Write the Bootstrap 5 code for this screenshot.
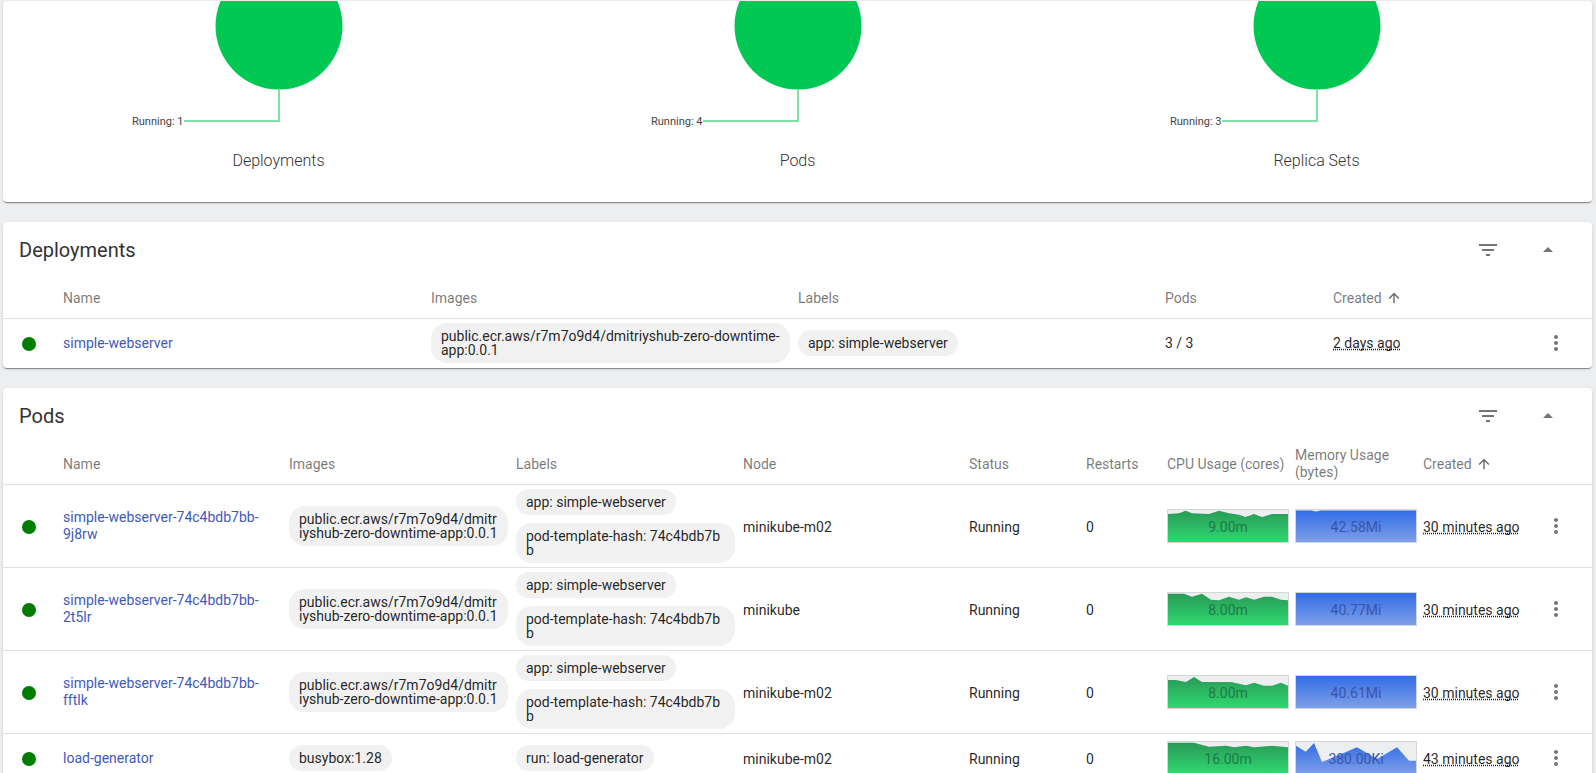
<!DOCTYPE html>
<html lang="en">
<head>
  <meta charset="UTF-8" />
  <meta name="viewport" content="width=device-width, initial-scale=1.0" />
  <title>Workloads</title>
  <link href="https://cdn.jsdelivr.net/npm/bootstrap@5.3.3/dist/css/bootstrap.min.css" rel="stylesheet" />
  <style>
    html, body {
      height: 100%;
      overflow: hidden;
    }
    body {
      background-color: #edeef0;
      font-family: Roboto, "Liberation Sans", sans-serif;
      font-size: 14px;
      color: rgba(0,0,0,.87);
    }
    .page-wrap {
      padding: 1px 4px 0 3px;
    }
    .panel {
      border: 0;
      border-radius: 4px;
      margin-bottom: 20px;
      box-shadow: 0 2px 1px -1px rgba(0,0,0,.3), 0 1px 1px rgba(0,0,0,.14), 0 1px 3px rgba(0,0,0,.12);
    }
    .charts {
      height: 201px;
      padding: 0 16px;
    }
    .chart-box {
      width: 519px;
    }
    .chart-box svg {
      display: block;
    }
    .chart-label {
      font-size: 11px;
      fill: #444;
    }
    .chart-title {
      margin-top: 17px;
      font-size: 16px;
      font-weight: 300;
      line-height: 24px;
      color: #333;
    }
    .panel-bar {
      height: 56px;
      padding: 0 16px;
    }
    .panel-title {
      font-size: 20px;
      font-weight: 400;
      margin: 0;
      color: #333;
    }
    .bar-icons {
      width: 84px;
      margin-right: 16px;
    }
    .kd-table {
      table-layout: fixed;
      width: 100%;
      margin: 0;
      font-size: 14px;
    }
    .kd-table th, .kd-table td {
      padding: 0 8px 0 0;
      vertical-align: middle;
      border-bottom: 1px solid #e0e0e0;
      line-height: 17px;
    }
    .kd-table th {
      height: 40px;
      padding-top: 2px;
      font-weight: 400;
      color: rgba(0,0,0,.54);
    }
    .kd-table th.two-line {
      padding-top: 0;
    }
    .kd-table td {
      height: 83px;
    }
    .kd-table td.text-cell {
      padding-top: 3px;
    }
    .deploy-table td, .kd-table tr.short-row td {
      height: 50px;
    }
    .kd-table tbody tr:last-child td {
      border-bottom: 0;
    }
    .kd-table a {
      color: #3f5ab8;
      text-decoration: none;
    }
    .kd-table td.dot-cell {
      padding-left: 19px;
    }
    .status-dot {
      display: block;
      width: 14px;
      height: 14px;
      border-radius: 50%;
      background: #007c00;
      margin-top: 2px;
    }
    .chip-list {
      display: flex;
      flex-direction: column;
      align-items: flex-start;
      gap: 8px;
    }
    .tag-chip {
      background: #f1f1f1;
      border-radius: 16px;
      padding: 6px 10px;
      line-height: 14px;
      word-break: break-all;
    }
    .word-chip {
      word-break: normal;
      overflow-wrap: anywhere;
    }
    .kd-table abbr {
      text-decoration: underline dotted;
      cursor: default;
    }
    .spark {
      display: block;
      width: 122px;
      height: 34px;
      border: 1px solid #d4d6d8;
      background: #eceef0;
    }
    .spark text {
      font-size: 14px;
      text-anchor: middle;
    }
    .menu-icon {
      display: block;
      margin-left: 6px;
    }
    .sort-arrow {
      margin-left: 4px;
      vertical-align: -3px;
    }
  </style>
</head>
<body>
  <svg width="0" height="0" class="d-block">
    <defs>
      <linearGradient id="greenFill" x1="0" y1="0" x2="0" y2="1">
        <stop offset="0" stop-color="#2a9a57" />
        <stop offset="1" stop-color="#2fd870" />
      </linearGradient>
      <linearGradient id="blueFill" x1="0" y1="0" x2="0" y2="1">
        <stop offset="0" stop-color="#326de6" />
        <stop offset="1" stop-color="#7f9fe8" />
      </linearGradient>
    </defs>
  </svg>

  <div class="page-wrap">
    <!-- status charts -->
    <div class="card panel">
      <div class="charts d-flex">
        <div class="chart-box text-center">
          <svg width="519" height="131">
            <circle cx="260" cy="25" r="63.5" fill="#00c853" />
            <polyline points="260,88 260,120 165,120" fill="none" stroke="#80e0a8" stroke-width="2" />
            <text class="chart-label" x="164.5" y="124" text-anchor="end">Running: 1</text>
          </svg>
          <div class="chart-title">Deployments</div>
        </div>
        <div class="chart-box text-center">
          <svg width="519" height="131">
            <circle cx="260" cy="25" r="63.5" fill="#00c853" />
            <polyline points="260,88 260,120 165,120" fill="none" stroke="#80e0a8" stroke-width="2" />
            <text class="chart-label" x="164.5" y="124" text-anchor="end">Running: 4</text>
          </svg>
          <div class="chart-title">Pods</div>
        </div>
        <div class="chart-box text-center">
          <svg width="519" height="131">
            <circle cx="260" cy="25" r="63.5" fill="#00c853" />
            <polyline points="260,88 260,120 165,120" fill="none" stroke="#80e0a8" stroke-width="2" />
            <text class="chart-label" x="164.5" y="124" text-anchor="end">Running: 3</text>
          </svg>
          <div class="chart-title">Replica Sets</div>
        </div>
      </div>
    </div>

    <!-- deployments -->
    <div class="card panel">
      <div class="panel-bar d-flex align-items-center justify-content-between">
        <h2 class="panel-title">Deployments</h2>
        <div class="bar-icons d-flex justify-content-between align-items-center">
          <svg width="24" height="24" viewBox="0 0 24 24" fill="#757575"><path d="M10 18h4v-2h-4v2zM3 6v2h18V6H3zm3 7h12v-2H6v2z" /></svg>
          <svg width="24" height="24" viewBox="0 0 24 24" fill="#757575"><path d="M7 14l5-5 5 5z" /></svg>
        </div>
      </div>
      <table class="kd-table deploy-table">
        <colgroup>
          <col style="width:60px" /><col style="width:368px" /><col style="width:367px" /><col style="width:367px" /><col style="width:168px" /><col style="width:205px" /><col style="width:54px" />
        </colgroup>
        <thead>
          <tr>
            <th></th><th>Name</th><th>Images</th><th>Labels</th><th>Pods</th>
            <th>Created<svg class="sort-arrow" width="16" height="16" viewBox="0 0 24 24" fill="#616161"><path d="M4 12l1.41 1.41L11 7.83V20h2V7.83l5.58 5.59L20 12l-8-8-8 8z" /></svg></th>
            <th></th>
          </tr>
        </thead>
        <tbody>
          <tr>
            <td class="dot-cell"><span class="status-dot"></span></td>
            <td><a href="#">simple-webserver</a></td>
            <td><div class="chip-list"><span class="tag-chip word-chip">public.ecr.aws/r7m7o9d4/dmitriyshub-zero-downtime-app:0.0.1</span></div></td>
            <td><div class="chip-list"><span class="tag-chip">app: simple-webserver</span></div></td>
            <td>3 / 3</td>
            <td><abbr title="2 days ago">2 days ago</abbr></td>
            <td><svg class="menu-icon" width="24" height="24" viewBox="0 0 24 24" fill="#757575"><path d="M12 8c1.1 0 2-.9 2-2s-.9-2-2-2-2 .9-2 2 .9 2 2 2zm0 2c-1.1 0-2 .9-2 2s.9 2 2 2 2-.9 2-2-.9-2-2-2zm0 6c-1.1 0-2 .9-2 2s.9 2 2 2 2-.9 2-2-.9-2-2-2z" /></svg></td>
          </tr>
        </tbody>
      </table>
    </div>

    <!-- pods -->
    <div class="card panel">
      <div class="panel-bar d-flex align-items-center justify-content-between">
        <h2 class="panel-title">Pods</h2>
        <div class="bar-icons d-flex justify-content-between align-items-center">
          <svg width="24" height="24" viewBox="0 0 24 24" fill="#757575"><path d="M10 18h4v-2h-4v2zM3 6v2h18V6H3zm3 7h12v-2H6v2z" /></svg>
          <svg width="24" height="24" viewBox="0 0 24 24" fill="#757575"><path d="M7 14l5-5 5 5z" /></svg>
        </div>
      </div>
      <table class="kd-table">
        <colgroup>
          <col style="width:60px" /><col style="width:226px" /><col style="width:227px" /><col style="width:227px" /><col style="width:226px" /><col style="width:117px" /><col style="width:81px" /><col style="width:128px" /><col style="width:128px" /><col style="width:115px" /><col style="width:54px" />
        </colgroup>
        <thead>
          <tr>
            <th></th><th>Name</th><th>Images</th><th>Labels</th><th>Node</th><th>Status</th><th>Restarts</th><th>CPU Usage (cores)</th><th class="two-line">Memory Usage (bytes)</th>
            <th>Created<svg class="sort-arrow" width="16" height="16" viewBox="0 0 24 24" fill="#616161"><path d="M4 12l1.41 1.41L11 7.83V20h2V7.83l5.58 5.59L20 12l-8-8-8 8z" /></svg></th>
            <th></th>
          </tr>
        </thead>
        <tbody id="podRows"></tbody>
      </table>
    </div>
  </div>

  <script>
    const pods = [
      { name: 'simple-webserver-74c4bdb7bb-9j8rw', node: 'minikube-m02', cpu: '9.00m', mem: '42.58Mi', age: '30 minutes ago',
        cpuLine: '0,4 11,3.3 17.7,.7 24,3.3 41,4 51,.7 61,3.3 71,4.7 77.7,7 86,4 94,7 104,4 120,4',
        memLine: '0,.5 15,.5 20,1.5 25,.5 120,.5' },
      { name: 'simple-webserver-74c4bdb7bb-2t5lr', node: 'minikube', cpu: '8.00m', mem: '40.77Mi', age: '30 minutes ago',
        cpuLine: '0,.7 16,.7 24,3.7 34,.7 43,6.7 51,7.3 61,3.7 71,6.7 78,4.3 86,6.7 96,3.7 104,3.7 113,6.7 120,7.3',
        memLine: '0,0 120,0' },
      { name: 'simple-webserver-74c4bdb7bb-fftlk', node: 'minikube-m02', cpu: '8.00m', mem: '40.61Mi', age: '30 minutes ago',
        cpuLine: '0,4 7.7,4 18,6 26,1 34,6 63,6 78,9.3 86,6.7 96,9.7 104,9.7 113,6.7 120,9.7',
        memLine: '0,0 120,0' },
      { name: 'load-generator', node: 'minikube-m02', cpu: '16.00m', mem: '380.00Ki', age: '43 minutes ago', image: 'busybox:1.28', label: 'run: load-generator',
        cpuLine: '0,.7 26,.7 41,4.7 58,3.7 66,5.3 78,3.7 86,5.3 104,3.7 120,5.3',
        memLine: '0,3.7 9.7,9.7 18,1 26,20 41,13.7 61,5.3 81,17 101,5.3 113,18.7 120,18.7' }
    ];

    function spark(line, fill, textColor, value) {
      return `<svg class="spark" viewBox="0 0 120 32">
        <polygon points="0,32 ${line} 120,32" fill="url(#${fill})" />
        <text x="60" y="22" fill="${textColor}">${value}</text>
      </svg>`;
    }

    const menuIcon = '<svg class="menu-icon" width="24" height="24" viewBox="0 0 24 24" fill="#757575"><path d="M12 8c1.1 0 2-.9 2-2s-.9-2-2-2-2 .9-2 2 .9 2 2 2zm0 2c-1.1 0-2 .9-2 2s.9 2 2 2 2-.9 2-2-.9-2-2-2zm0 6c-1.1 0-2 .9-2 2s.9 2 2 2 2-.9 2-2-.9-2-2-2z" /></svg>';

    document.getElementById('podRows').innerHTML = pods.map(pod => {
      const image = pod.image || 'public.ecr.aws/r7m7o9d4/dmitriyshub-zero-downtime-app:0.0.1';
      const labels = pod.label
        ? `<span class="tag-chip">${pod.label}</span>`
        : '<span class="tag-chip">app: simple-webserver</span><span class="tag-chip">pod-template-hash: 74c4bdb7bb</span>';
      return `
        <tr class="${pod.label ? 'short-row' : ''}">
          <td class="dot-cell"><span class="status-dot"></span></td>
          <td><a href="#">${pod.name}</a></td>
          <td><div class="chip-list"><span class="tag-chip">${image}</span></div></td>
          <td><div class="chip-list">${labels}</div></td>
          <td class="text-cell">${pod.node}</td>
          <td class="text-cell">Running</td>
          <td class="text-cell">0</td>
          <td>${spark(pod.cpuLine, 'greenFill', '#1d7a46', pod.cpu)}</td>
          <td>${spark(pod.memLine, 'blueFill', '#3a55a8', pod.mem)}</td>
          <td class="text-cell"><abbr title="${pod.age}">${pod.age}</abbr></td>
          <td>${menuIcon}</td>
        </tr>`;
    }).join('');
  </script>
  <script src="https://cdn.jsdelivr.net/npm/bootstrap@5.3.3/dist/js/bootstrap.bundle.min.js"></script>
</body>
</html>
